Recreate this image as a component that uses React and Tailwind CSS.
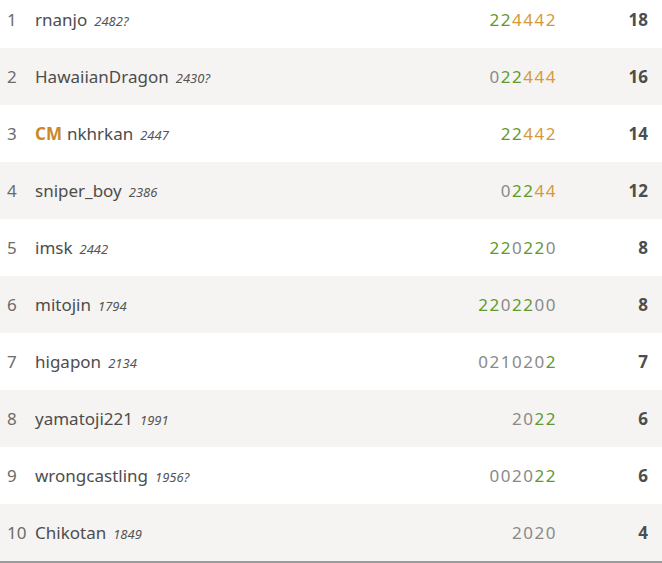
import React from 'react';

// sheet colours per digit: g = green (win), o = orange (on fire), z = grey
const players = [
  { rank: 1, name: 'rnanjo', rating: '2482?', sheet: '224442', colors: 'ggoooo', total: 18 },
  { rank: 2, name: 'HawaiianDragon', rating: '2430?', sheet: '022444', colors: 'zggooo', total: 16 },
  { rank: 3, title: 'CM', name: 'nkhrkan', rating: '2447', sheet: '22442', colors: 'ggooo', total: 14 },
  { rank: 4, name: 'sniper_boy', rating: '2386', sheet: '02244', colors: 'zggoo', total: 12 },
  { rank: 5, name: 'imsk', rating: '2442', sheet: '220220', colors: 'ggzggz', total: 8 },
  { rank: 6, name: 'mitojin', rating: '1794', sheet: '2202200', colors: 'ggzggzz', total: 8 },
  { rank: 7, name: 'higapon', rating: '2134', sheet: '0210202', colors: 'zzzzzzg', total: 7 },
  { rank: 8, name: 'yamatoji221', rating: '1991', sheet: '2022', colors: 'zzgg', total: 6 },
  { rank: 9, name: 'wrongcastling', rating: '1956?', sheet: '002022', colors: 'zzzzgg', total: 6 },
  { rank: 10, name: 'Chikotan', rating: '1849', sheet: '2020', colors: 'zzzz', total: 4 },
];

const colorClass = {
  g: 'text-[#5f9a2f]',
  o: 'text-[#d59a3a]',
  z: 'text-[#8a8a8a]',
};

const Row = ({ p, striped }) => (
  <div className={`flex items-center h-[57px] ${striped ? 'bg-[#f5f4f2]' : 'bg-white'}`}>
    <div className="w-[35px] pl-[7px] text-[17px] text-[#6b6b6b]">{p.rank}</div>
    <div className="flex-1 flex items-baseline text-[17px] text-[#4d4d4d]">
      {p.title && <span className="font-bold text-[#c8892a] mr-[5px]">{p.title}</span>}
      <span>{p.name}</span>
      <span className="ml-[7px] text-[13px] italic text-[#555]">{p.rating}</span>
    </div>
    <div className="w-[200px] pr-[65px] text-right text-[17px] tracking-[1.5px]">
      {p.sheet.split('').map((d, i) => (
        <span key={i} className={colorClass[p.colors[i]]}>{d}</span>
      ))}
    </div>
    <div className="w-[40px] pr-[14px] text-right text-[17px] font-bold text-[#4d4d4d]">{p.total}</div>
  </div>
);

export default function App() {
  return (
    <div className="w-[662px] h-[563px] overflow-hidden bg-white" style={{ fontFamily: '"Noto Sans", sans-serif' }}>
      <div className="-mt-[9px] border-b-2 border-[#9a9a9a]">
        {players.map((p, i) => (
          <Row key={p.rank} p={p} striped={i % 2 === 1} />
        ))}
      </div>
    </div>
  );
}
